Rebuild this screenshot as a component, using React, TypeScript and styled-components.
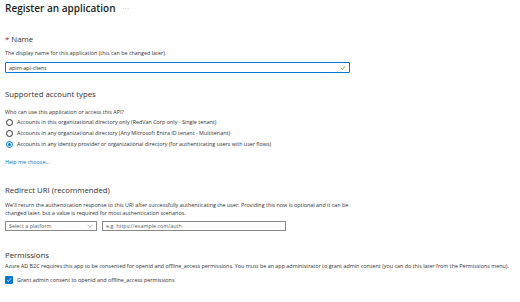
import styled, { createGlobalStyle } from "styled-components";

const GlobalStyle = createGlobalStyle`
  html, body {
    margin: 0;
    padding: 0;
    background: #ffffff;
  }
  body {
    font-family: "Open Sans", "Noto Sans", sans-serif;
    color: #323130;
  }
`;

const Page = styled.div`
  width: 520px;
  height: 302px;
  overflow: hidden;
  padding: 0 5px;
  box-sizing: border-box;
`;

const Header = styled.div`
  display: flex;
  align-items: center;
  gap: 7px;
  height: 16px;
`;

const Title = styled.h1`
  margin: 0;
  font-size: 10px;
  font-weight: 600;
  color: #201f1e;
`;

const More = styled.span`
  font-size: 7px;
  color: #a19f9d;
  letter-spacing: 0.5px;
`;

const Section = styled.section<{ top: number }>`
  margin-top: ${({ top }) => top}px;
`;

const Heading = styled.h2`
  margin: 0;
  font-size: 7.8px;
  font-weight: 400;
  line-height: 10px;
  color: #323130;
`;

const Required = styled.span`
  color: #a4262c;
  margin-right: 2px;
`;

const Text = styled.p<{ top?: number }>`
  margin: ${({ top }) => top ?? 0}px 0 0;
  font-size: 5.4px;
  line-height: 8px;
  color: #323130;
`;

const NameInput = styled.div`
  margin-top: 5px;
  width: 345px;
  height: 11px;
  border: 1px solid #0078d4;
  border-radius: 1px;
  display: flex;
  align-items: center;
  justify-content: space-between;
  padding: 0 3px;
  box-sizing: border-box;
  font-size: 5.4px;
`;

const RadioList = styled.div`
  margin-top: 2px;
  display: flex;
  flex-direction: column;
  gap: 3px;
`;

const RadioRow = styled.label`
  display: flex;
  align-items: center;
  gap: 4px;
  height: 8px;
  font-size: 5.4px;
`;

const RadioCircle = styled.span<{ checked?: boolean }>`
  width: 7px;
  height: 7px;
  border-radius: 50%;
  border: 0.8px solid ${({ checked }) => (checked ? "#0078d4" : "#323130")};
  box-sizing: border-box;
  display: flex;
  align-items: center;
  justify-content: center;
  margin-left: 1px;

  &::after {
    content: "";
    width: 3px;
    height: 3px;
    border-radius: 50%;
    background: ${({ checked }) => (checked ? "#0078d4" : "transparent")};
  }
`;

const Link = styled.a`
  display: block;
  margin-top: 10px;
  font-size: 5.4px;
  line-height: 8px;
  color: #0078d4;
`;

const UriRow = styled.div`
  margin-top: 4px;
  display: flex;
  gap: 5px;
`;

const Field = styled.div<{ width: number }>`
  width: ${({ width }) => width}px;
  height: 10px;
  border: 0.8px solid #8a8886;
  box-sizing: border-box;
  display: flex;
  align-items: center;
  justify-content: space-between;
  padding: 0 3px;
  font-size: 5.4px;
  color: #605e5c;
`;

const CheckRow = styled.label`
  margin-top: 6px;
  display: flex;
  align-items: center;
  gap: 4px;
  font-size: 5.4px;
`;

const CheckBox = styled.span`
  width: 8px;
  height: 8px;
  border-radius: 1px;
  background: #0078d4;
  display: flex;
  align-items: center;
  justify-content: center;
`;

const Check = ({ color }: { color: string }) => (
  <svg width="6" height="6" viewBox="0 0 12 12" fill="none">
    <path d="M2.5 6.5l2.5 2.5 4.5-6" stroke={color} strokeWidth="1.4" strokeLinecap="round" strokeLinejoin="round" />
  </svg>
);

const Chevron = () => (
  <svg width="6" height="4" viewBox="0 0 12 7" fill="none">
    <path d="M1 1l5 5 5-5" stroke="#605e5c" strokeWidth="1" />
  </svg>
);

const accountOptions = [
  "Accounts in this organizational directory only (RedVan Corp only - Single tenant)",
  "Accounts in any organizational directory (Any Microsoft Entra ID tenant - Multitenant)",
  "Accounts in any identity provider or organizational directory (for authenticating users with user flows)",
];

export default function App() {
  return (
    <Page>
      <GlobalStyle />
      <Header>
        <Title>Register an application</Title>
        <More>···</More>
      </Header>

      <Section top={18}>
        <Heading>
          <Required>*</Required>Name
        </Heading>
        <Text top={5}>The display name for this application (this can be changed later).</Text>
        <NameInput>
          <span>apim-api-client</span>
          <Check color="#57a300" />
        </NameInput>
      </Section>

      <Section top={16}>
        <Heading>Supported account types</Heading>
        <Text top={9}>Who can use this application or access this API?</Text>
        <RadioList>
          {accountOptions.map((label, i) => (
            <RadioRow key={label}>
              <RadioCircle checked={i === 2} />
              {label}
            </RadioRow>
          ))}
        </RadioList>
        <Link>Help me choose...</Link>
      </Section>

      <Section top={19}>
        <Heading>Redirect URI (recommended)</Heading>
        <Text top={6}>
          We'll return the authentication response to this URI after successfully authenticating the user. Providing this now is optional and it can be
          <br />
          changed later, but a value is required for most authentication scenarios.
        </Text>
        <UriRow>
          <Field width={92}>
            <span>Select a platform</span>
            <Chevron />
          </Field>
          <Field width={184}>
            <span>e.g. https://example.com/auth</span>
          </Field>
        </UriRow>
      </Section>

      <Section top={19}>
        <Heading>Permissions</Heading>
        <Text top={2}>
          Azure AD B2C requires this app to be consented for openid and offline_access permissions. You must be an app administrator to grant admin consent (you can do this later from the Permissions menu).
        </Text>
        <CheckRow>
          <CheckBox>
            <Check color="#ffffff" />
          </CheckBox>
          Grant admin consent to openid and offline_access permissions
        </CheckRow>
      </Section>
    </Page>
  );
}
